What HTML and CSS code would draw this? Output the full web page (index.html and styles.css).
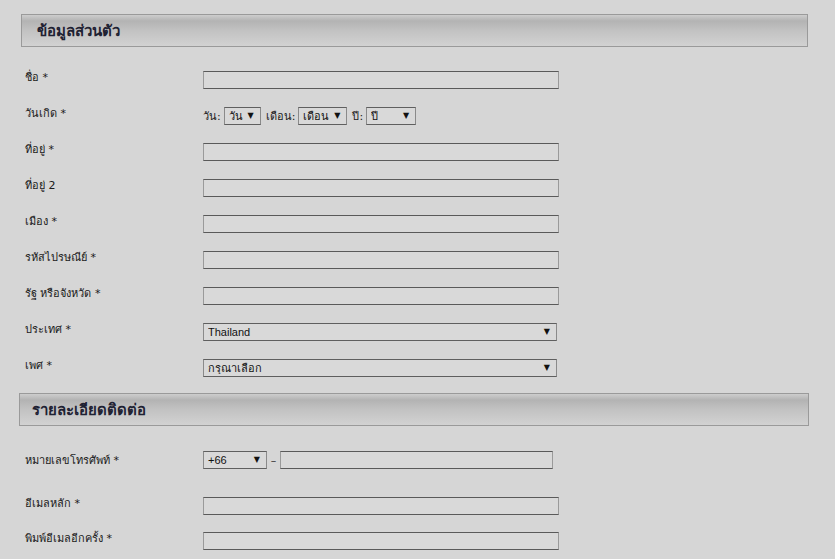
FILE: index.html
```html
<!DOCTYPE html>
<html lang="th">
<head>
    <meta charset="UTF-8">
    <meta name="viewport" content="width=device-width, initial-scale=1.0">
    <title>สมัครสมาชิก</title>
    <link rel="stylesheet" href="styles.css">
</head>
<body>
<div class="page">
    <div class="section-head"><h2>ข้อมูลส่วนตัว</h2></div>
    <form class="reg-form">
        <div class="row">
            <label class="names" for="fname">ชื่อ *</label>
            <input type="text" id="fname" class="field">
        </div>
        <div class="row">
            <span class="names">วันเกิด *</span>
            <div class="dob">
                <span>วัน:</span>
                <div class="sel sel-day"><select><option>วัน</option></select></div>
                <span>เดือน:</span>
                <div class="sel sel-month"><select><option>เดือน</option></select></div>
                <span>ปี:</span>
                <div class="sel sel-year"><select><option>ปี</option></select></div>
            </div>
        </div>
        <div class="row">
            <label class="names" for="addr1">ที่อยู่ *</label>
            <input type="text" id="addr1" class="field">
        </div>
        <div class="row">
            <label class="names" for="addr2">ที่อยู่ 2</label>
            <input type="text" id="addr2" class="field">
        </div>
        <div class="row">
            <label class="names" for="city">เมือง *</label>
            <input type="text" id="city" class="field">
        </div>
        <div class="row">
            <label class="names" for="zip">รหัสไปรษณีย์ *</label>
            <input type="text" id="zip" class="field">
        </div>
        <div class="row">
            <label class="names" for="state">รัฐ หรือจังหวัด *</label>
            <input type="text" id="state" class="field">
        </div>
        <div class="row">
            <label class="names" for="country">ประเทศ *</label>
            <div class="sel sel-wide"><select id="country"><option>Thailand</option></select></div>
        </div>
        <div class="row">
            <label class="names" for="sex">เพศ *</label>
            <div class="sel sel-wide"><select id="sex"><option>กรุณาเลือก</option></select></div>
        </div>
    </form>

    <div class="section-head second"><h2>รายละเอียดติดต่อ</h2></div>
    <form class="reg-form">
        <div class="row row-phone">
            <label class="names" for="phone">หมายเลขโทรศัพท์ *</label>
            <div class="phone">
                <div class="sel sel-code"><select><option>+66</option></select></div>
                <span class="dash">–</span>
                <input type="text" id="phone" class="field field-phone">
            </div>
        </div>
        <div class="row row-tight">
            <label class="names" for="email">อีเมลหลัก *</label>
            <input type="text" id="email" class="field">
        </div>
        <div class="row">
            <label class="names" for="email2">พิมพ์อีเมลอีกครั้ง *</label>
            <input type="text" id="email2" class="field">
        </div>
    </form>
</div>
</body>
</html>
```
FILE: styles.css
```css
/* Reset */
* {
  box-sizing: border-box;
  margin: 0;
  padding: 0;
}

body {
  font-family: Tahoma, "DejaVu Sans", "Noto Sans", sans-serif;
  font-size: 11px;
  color: #1a1a1a;
  background: #d6d6d6;
  overflow: hidden;
}

.page {
  padding: 14px 27px 0 21px;
}

/* Section headers */
.section-head {
  height: 33px;
  border: 1px solid #9a9a9a;
  background: linear-gradient(to bottom, #cdcdcd 0, #b3b3b3 6px, #c2c2c2 50%, #d2d2d2 100%);
  display: flex;
  align-items: center;
  padding-left: 15px;
}

.section-head h2 {
  font-size: 15px;
  font-weight: bold;
  color: #1f2233;
}

.section-head.second {
  margin-left: -2px;
  margin-right: -1px;
  padding-left: 12px;
}

/* Form rows */
.reg-form {
  padding-top: 15px;
  padding-bottom: 7px;
}

.row {
  display: flex;
  align-items: center;
  height: 36px;
  padding-left: 4px;
}

.row .names {
  padding-bottom: 6px;
}

.row-tight {
  height: 35px;
}

.row-phone {
  height: 47px;
  align-items: flex-start;
  padding-top: 10px;
}

.row-phone .names {
  padding-bottom: 0;
}

.names {
  width: 178px;
  flex-shrink: 0;
  color: #1a1a1a;
}

.field {
  width: 356px;
  height: 18px;
  border: 1px solid #7a7a7a;
  border-top-color: #5a5a5a;
  border-bottom-color: #5a5a5a;
  border-left-color: #9a9a9a;
  border-right-color: #9a9a9a;
  background: #d9d9d9;
  font: inherit;
}

/* Selects */
.sel {
  position: relative;
  height: 18px;
  border: 1px solid #8a8a8a;
  border-top-color: #5f5f5f;
  border-bottom-color: #5f5f5f;
  background: #d9d9d9;
}

.sel select {
  appearance: none;
  -webkit-appearance: none;
  border: none;
  background: transparent;
  width: 100%;
  height: 100%;
  padding-left: 4px;
  font-family: "Liberation Sans", Tahoma, sans-serif;
  font-size: 11px;
  color: #111;
}

.sel::after {
  content: "▼";
  position: absolute;
  right: 6px;
  top: 3px;
  font-size: 8px;
  color: #111;
  pointer-events: none;
}

.sel-wide {
  width: 354px;
}

.dob {
  display: flex;
  align-items: center;
  gap: 3px;
}

.sel-day {
  width: 37px;
  margin-right: 2px;
}

.sel-month {
  width: 49px;
  margin-right: 2px;
}

.sel-year {
  width: 50px;
}

/* Phone */
.phone {
  display: flex;
  align-items: center;
}

.sel-code {
  width: 64px;
}

.dash {
  width: 13px;
  text-align: center;
  color: #333;
}

.field-phone {
  width: 273px;
  height: 18px;
}
```
